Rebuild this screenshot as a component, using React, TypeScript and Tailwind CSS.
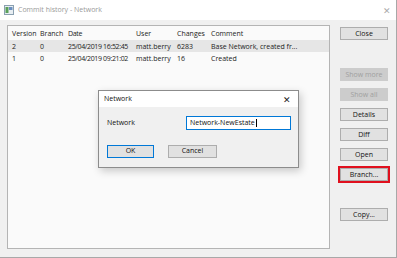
import React from "react";

type Row = {
  version: string;
  branch: string;
  date: string;
  user: string;
  changes: string;
  comment: string;
};

const rows: Row[] = [
  { version: "2", branch: "0", date: "25/04/2019 16:52:45", user: "matt.berry", changes: "6283", comment: "Base Network, created fr..." },
  { version: "1", branch: "0", date: "25/04/2019 09:21:02", user: "matt.berry", changes: "16", comment: "Created" },
];

const FONT = { fontFamily: '"Open Sans", "Noto Sans", sans-serif' };

function SideButton({ label, disabled, top }: { label: string; disabled?: boolean; top: string }) {
  return (
    <div
      className={`${top} flex h-[13px] w-[48px] items-center justify-center border text-[7px] leading-none ${
        disabled ? "border-[#cccccc] bg-[#cccccc] text-[#a0a0a0]" : "border-[#adadad] bg-[#e1e1e1] text-[#111]"
      }`}
    >
      {label}
    </div>
  );
}

function Cells({ row, className }: { row: Row; className: string }) {
  return (
    <div className={`flex h-[12px] items-center whitespace-nowrap text-[7px] leading-none text-[#222] ${className}`}>
      <span className="w-[32px] pl-[4px]">{row.version}</span>
      <span className="w-[28px]">{row.branch}</span>
      <span className="w-[68px] tracking-[-0.35px]">{row.date}</span>
      <span className="w-[41px]">{row.user}</span>
      <span className="w-[34px]">{row.changes}</span>
      <span>{row.comment}</span>
    </div>
  );
}

export default function App() {
  return (
    <div className="relative h-[258px] w-[397px] overflow-hidden border-r border-b border-[#a8a8a8] bg-white" style={FONT}>
      {/* title bar */}
      <div className="flex h-[20px] items-center bg-white pl-[4px] pr-[5px]">
        <svg width="10" height="10" viewBox="0 0 10 10">
          <rect x="0.5" y="0.5" width="9" height="9" fill="#e8eef2" stroke="#8aa0b0" />
          <rect x="1.5" y="2" width="3" height="6" fill="#5aa05a" />
          <rect x="5" y="2" width="3.5" height="3" fill="#6b8fc0" />
        </svg>
        <span className="ml-[4px] text-[7px] text-[#9a9a9a]">Commit history - Network</span>
        <span className="ml-auto text-[9px] font-light leading-none text-[#aaaaaa]">✕</span>
      </div>

      {/* body */}
      <div className="flex h-[238px] bg-[#f0f0f0] pl-[7px] pt-[5px]">
        <div className="h-[224px] w-[323px] border border-[#b4b4b4] bg-[#fafafa] pt-[1px]">
          <Cells
            className=""
            row={{ version: "Version", branch: "Branch", date: "Date", user: "User", changes: "Changes", comment: "Comment" }}
          />
          <Cells row={rows[0]} className="mt-[1px] bg-[#e6e6e6]" />
          <Cells row={rows[1]} className="" />
        </div>

        <div className="ml-[10px] flex flex-col">
          <SideButton label="Close" top="mt-[2px]" />
          <SideButton label="Show more" disabled top="mt-[28px]" />
          <SideButton label="Show all" disabled top="mt-[7px]" />
          <SideButton label="Details" top="mt-[7px]" />
          <SideButton label="Diff" top="mt-[7px]" />
          <SideButton label="Open" top="mt-[7px]" />
          <div className="relative mt-[7px]">
            <SideButton label="Branch..." top="" />
            <div className="absolute -left-[2px] -top-[2px] h-[17px] w-[52px] border-2 border-[#e0101e]" />
          </div>
          <SideButton label="Copy..." top="mt-[27px]" />
        </div>
      </div>

      {/* modal */}
      <div className="absolute left-[98px] top-[90px] h-[78px] w-[201px] border border-[#8c8c8c] bg-[#f0f0f0] shadow-[2px_3px_8px_rgba(0,0,0,0.2)]">
        <div className="flex h-[16px] items-center bg-white pl-[5px] pr-[7px]">
          <span className="text-[7px] text-[#111]">Network</span>
          <span className="ml-auto text-[9px] leading-none text-[#222]">✕</span>
        </div>
        <div className="flex items-center pl-[8px] pt-[9px]">
          <span className="w-[79px] text-[7px] text-[#111]">Network</span>
          <div className="flex h-[14px] w-[105px] items-center border border-[#0078d7] bg-white pl-[3px] text-[7px] text-[#111]">
            Network-NewEstate
            <span className="ml-[1px] h-[8px] w-px bg-black" />
          </div>
        </div>
        <div className="flex pl-[8px] pt-[15px]">
          <div className="flex h-[13px] w-[47px] items-center justify-center border border-[#0078d7] bg-[#e1e1e1] text-[7px] text-[#111]">
            OK
          </div>
          <div className="ml-[14px] flex h-[13px] w-[49px] items-center justify-center border border-[#adadad] bg-[#e1e1e1] text-[7px] text-[#111]">
            Cancel
          </div>
        </div>
      </div>
    </div>
  );
}
